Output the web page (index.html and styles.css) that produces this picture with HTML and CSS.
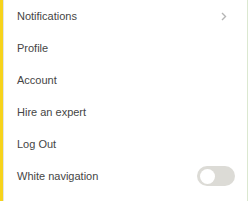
FILE: index.html
```html
<!DOCTYPE html>
<html>
<head>
<meta charset="utf-8">
<link rel="stylesheet" href="styles.css">
</head>
<body>
<nav class="menu">
  <div class="inner">
    <div class="row"><span class="label">Notifications</span>
      <svg class="chev" width="6" height="9" viewBox="0 0 6 9"><path d="M1 1 L4.5 4.5 L1 8" fill="none" stroke="#b5b5b5" stroke-width="1.4"/></svg>
    </div>
    <div class="row"><span class="label">Profile</span></div>
    <div class="row"><span class="label">Account</span></div>
    <div class="row"><span class="label">Hire an expert</span></div>
    <div class="row"><span class="label">Log Out</span></div>
    <div class="row"><span class="label">White navigation</span>
      <span class="toggle"><span class="knob"></span></span>
    </div>
  </div>
</nav>
</body>
</html>
```
FILE: styles.css
```css
html, body { margin: 0; padding: 0; background: #fff; }
.menu {
  width: 244px;
  height: 201px;
  border-left: 3px solid #f6d31c;
  border-right: 1px solid #dbe8d0;
  font-family: "Liberation Sans", Arial, sans-serif;
  font-size: 11px;
  color: #454545;
}
.inner {
  border-left: 1px solid #e4e4e4;
  height: 100%;
  box-sizing: border-box;
}
.row {
  height: 32px;
  display: flex;
  align-items: center;
  padding-left: 13px;
}
.label { flex: 1; }
.chev { margin-right: 20px; }
.toggle {
  width: 38px;
  height: 20px;
  border-radius: 10px;
  background: #dcdbd6;
  margin-right: 12px;
  display: flex;
  align-items: center;
  padding-left: 3px;
  box-sizing: border-box;
}
.knob {
  width: 15px;
  height: 15px;
  border-radius: 50%;
  background: #fff;
}
```
